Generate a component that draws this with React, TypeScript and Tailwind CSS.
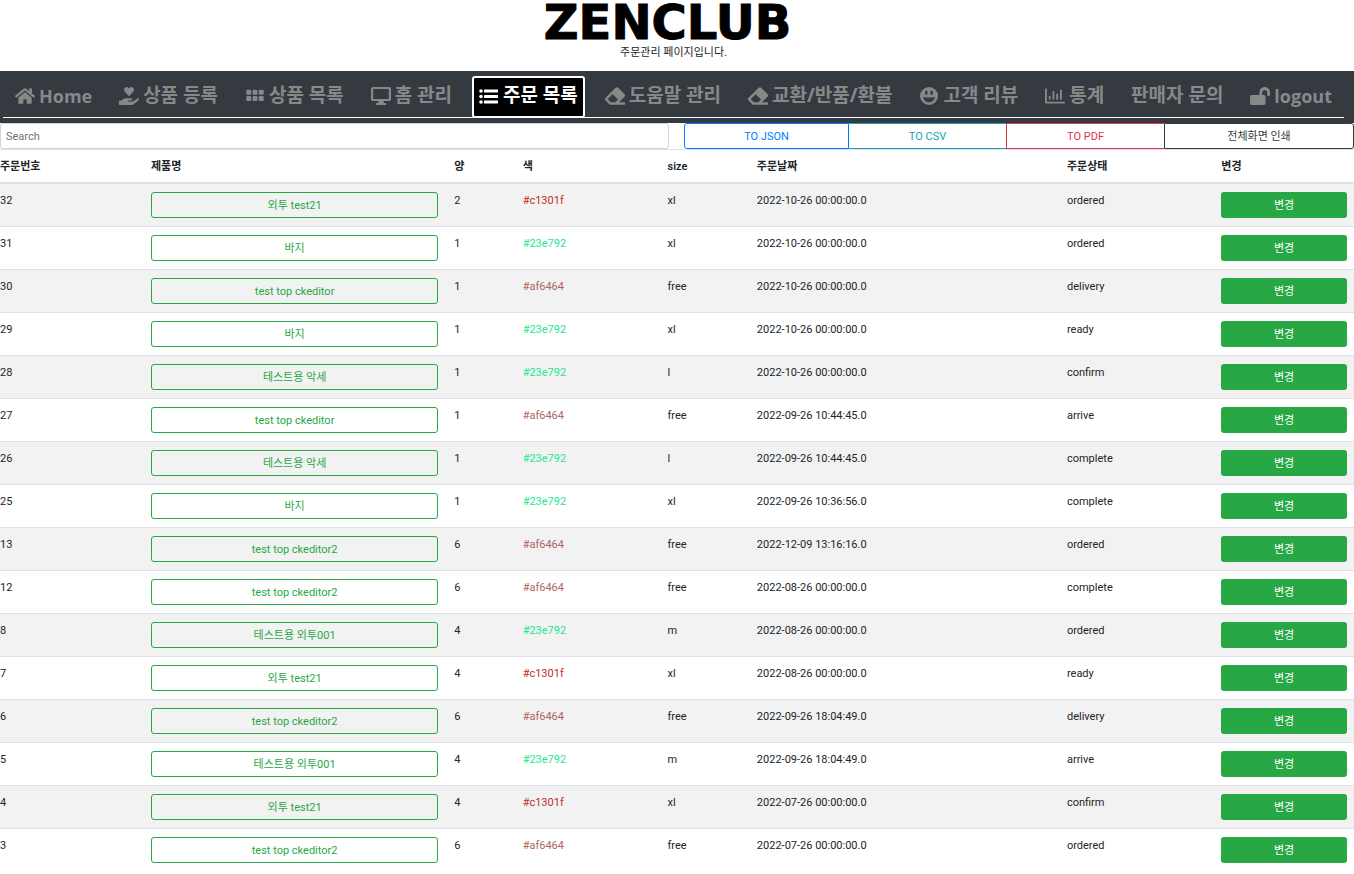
import { FaHome, FaHandHoldingHeart, FaEraser, FaLockOpen, FaRegChartBar } from 'react-icons/fa';
import { BsGrid3X2GapFill } from 'react-icons/bs';
import type { ComponentType } from 'react';

type IconProps = { className?: string };

function ListIcon({ className }: IconProps) {
  return (
    <svg viewBox="0 0 20 20" fill="currentColor" aria-hidden="true" className={className}>
      <circle cx="2" cy="5" r="1.8" />
      <circle cx="2" cy="10.5" r="1.8" />
      <circle cx="2" cy="16" r="1.8" />
      <rect x="5" y="3.5" width="14" height="3" rx="0.5" />
      <rect x="5" y="9" width="14" height="3" rx="0.5" />
      <rect x="5" y="14.5" width="14" height="3" rx="0.5" />
    </svg>
  );
}

function DisplayIcon({ className }: IconProps) {
  return (
    <svg viewBox="0 0 20 20" fill="currentColor" aria-hidden="true" className={className}>
      <path
        fillRule="evenodd"
        d="M1.8 1h16.4A1.8 1.8 0 0 1 20 2.8v10.4a1.8 1.8 0 0 1-1.8 1.8h-5.7l.5 2h1.5a.5.5 0 0 1 .5.5v1a.5.5 0 0 1-.5.5h-9a.5.5 0 0 1-.5-.5v-1a.5.5 0 0 1 .5-.5H7l.5-2H1.8A1.8 1.8 0 0 1 0 13.2V2.8A1.8 1.8 0 0 1 1.8 1ZM2.200 3v10h15.600V3Z"
      />
    </svg>
  );
}

function SmileIcon({ className }: IconProps) {
  return (
    <svg viewBox="0 0 20 20" fill="currentColor" aria-hidden="true" className={className}>
      <path
        fillRule="evenodd"
        d="M10 1a9 9 0 1 0 0 18a9 9 0 0 0 0-18ZM7.300 4.500c.8 0 1.300.9 1.300 2.200s-.5 2.200-1.300 2.200s-1.300-.9-1.300-2.200s.5-2.200 1.300-2.200ZM12.700 4.500c.8 0 1.300.9 1.300 2.200s-.5 2.200-1.300 2.200s-1.300-.9-1.300-2.200s.5-2.200 1.300-2.200ZM4.200 11q5.800 1.200 11.600 0a5.800 5.200 0 0 1-11.600 0Z"
      />
    </svg>
  );
}

type NavItem = { label: string; icon?: ComponentType<IconProps>; active?: boolean; latin?: boolean };

const navItems: NavItem[] = [
  { label: 'Home', icon: FaHome, latin: true },
  { label: '상품 등록', icon: FaHandHoldingHeart },
  { label: '상품 목록', icon: BsGrid3X2GapFill },
  { label: '홈 관리', icon: DisplayIcon },
  { label: '주문 목록', icon: ListIcon, active: true },
  { label: '도움말 관리', icon: FaEraser },
  { label: '교환/반품/환불', icon: FaEraser },
  { label: '고객 리뷰', icon: SmileIcon },
  { label: '통계', icon: FaRegChartBar },
  { label: '판매자 문의' },
  { label: 'logout', icon: FaLockOpen, latin: true },
];

type Order = [number, string, number, string, string, string, string];

const orders: Order[] = [
  [32, '외투 test21', 2, '#c1301f', 'xl', '2022-10-26 00:00:00.0', 'ordered'],
  [31, '바지', 1, '#23e792', 'xl', '2022-10-26 00:00:00.0', 'ordered'],
  [30, 'test top ckeditor', 1, '#af6464', 'free', '2022-10-26 00:00:00.0', 'delivery'],
  [29, '바지', 1, '#23e792', 'xl', '2022-10-26 00:00:00.0', 'ready'],
  [28, '테스트용 악세', 1, '#23e792', 'l', '2022-10-26 00:00:00.0', 'confirm'],
  [27, 'test top ckeditor', 1, '#af6464', 'free', '2022-09-26 10:44:45.0', 'arrive'],
  [26, '테스트용 악세', 1, '#23e792', 'l', '2022-09-26 10:44:45.0', 'complete'],
  [25, '바지', 1, '#23e792', 'xl', '2022-09-26 10:36:56.0', 'complete'],
  [13, 'test top ckeditor2', 6, '#af6464', 'free', '2022-12-09 13:16:16.0', 'ordered'],
  [12, 'test top ckeditor2', 6, '#af6464', 'free', '2022-08-26 00:00:00.0', 'complete'],
  [8, '테스트용 외투001', 4, '#23e792', 'm', '2022-08-26 00:00:00.0', 'ordered'],
  [7, '외투 test21', 4, '#c1301f', 'xl', '2022-08-26 00:00:00.0', 'ready'],
  [6, 'test top ckeditor2', 6, '#af6464', 'free', '2022-09-26 18:04:49.0', 'delivery'],
  [5, '테스트용 외투001', 4, '#23e792', 'm', '2022-09-26 18:04:49.0', 'arrive'],
  [4, '외투 test21', 4, '#c1301f', 'xl', '2022-07-26 00:00:00.0', 'confirm'],
  [3, 'test top ckeditor2', 6, '#af6464', 'free', '2022-07-26 00:00:00.0', 'ordered'],
];

const colorClass: Record<string, string> = {
  '#c1301f': 'text-[#c1301f]',
  '#23e792': 'text-[#23e792]',
  '#af6464': 'text-[#af6464]',
};

function Navigation() {
  return (
    <nav className="bg-[#343a40] pr-2.5 pb-[5px] pl-[3px] font-['Open_Sans','Noto_Sans_CJK_KR',sans-serif]">
      <ul className="flex items-end justify-between border-b border-white px-[5px] pt-[5px] text-[19px] leading-6 font-bold whitespace-nowrap">
        {navItems.map(({ label, icon: Icon, active, latin }) => (
          <li key={label} className="-mb-px">
            <a
              href="#"
              className={
                active
                  ? 'flex h-[42px] items-center gap-1 rounded-[3px] border-2 border-white bg-black px-[5px] pb-0.5 text-white'
                  : 'flex h-[42px] items-center gap-1 px-[7px] pb-[3px] text-[#888888]'
              }
            >
              {Icon && <Icon className="size-5" />}
              <span className={latin ? 'text-[18px]' : 'pb-0.5'}>{label}</span>
            </a>
          </li>
        ))}
      </ul>
    </nav>
  );
}

function Toolbar() {
  const button = 'h-[26px] border';
  return (
    <div className="flex">
      <div className="w-[669px] shrink">
        <input
          type="text"
          placeholder="Search"
          aria-label="Search"
          className="block h-[26px] w-full rounded-[3px] border border-[#ced4da] px-[5px] placeholder:text-[#6c757d]"
        />
      </div>
      <div className="ml-[15px] grid flex-1 grid-cols-[165fr_157fr_158fr_190fr]">
        <button className={`${button} rounded-l-[3px] border-[#007bff] text-[#007bff]`}>TO JSON</button>
        <button className={`${button} border-x-0 border-[#17a2b8] text-[#17a2b8]`}>TO CSV</button>
        <button className={`${button} border-r-0 border-[#dc3545] text-[#dc3545]`}>TO PDF</button>
        <button className={`${button} rounded-r-[3px] border-[#343a40] text-[#343a40]`}>전체화면 인쇄</button>
      </div>
    </div>
  );
}

function OrderTable() {
  return (
    <table className="w-full table-fixed border-separate border-spacing-0 text-left">
      <colgroup>
        <col className="w-[11.15%]" />
        <col className="w-[22.4%]" />
        <col className="w-[5.05%]" />
        <col className="w-[10.7%]" />
        <col className="w-[6.6%]" />
        <col className="w-[22.9%]" />
        <col className="w-[11.4%]" />
        <col className="w-[9.8%]" />
      </colgroup>
      <thead>
        <tr>
          {['주문번호', '제품명', '양', '색', 'size', '주문날짜', '주문상태', '변경'].map((title) => (
            <th key={title} scope="col" className="h-[35px] border-t border-b-2 border-[#dee2e6] font-semibold">
              {title}
            </th>
          ))}
        </tr>
      </thead>
      <tbody className="[&_td]:border-[#dee2e6] [&_td]:pt-2 [&_td]:pb-2 [&_tr+tr_td]:border-t">
        {orders.map(([id, name, amount, color, size, date, state]) => (
          <tr key={id} className="align-top odd:bg-[#f2f2f2]">
            <td>{id}</td>
            <td className="pr-4">
              <button className="block h-[26px] w-full rounded-[3px] border border-[#28a745] text-[#28a745]">{name}</button>
            </td>
            <td>{amount}</td>
            <td className={colorClass[color]}>{color}</td>
            <td>{size}</td>
            <td>{date}</td>
            <td>{state}</td>
            <td className="pr-[7px]">
              <button className="block h-[26px] w-full rounded-[3px] bg-[#28a745] text-white">변경</button>
            </td>
          </tr>
        ))}
      </tbody>
    </table>
  );
}

export default function App() {
  return (
    <div className="min-h-screen bg-white font-['Roboto','Noto_Sans_CJK_KR',sans-serif] text-[11px] leading-[17px] text-[#212529]">
      <header className="flex flex-col items-center pr-[7px] pb-2.5 text-center">
        <h1 className="pr-3 font-['DejaVu_Sans',sans-serif] text-[48px] leading-[44px] font-bold text-black [-webkit-text-stroke:1px_#000]">
          ZENCLUB
        </h1>
        <p>주문관리 페이지입니다.</p>
      </header>
      <Navigation />
      <Toolbar />
      <OrderTable />
    </div>
  );
}
